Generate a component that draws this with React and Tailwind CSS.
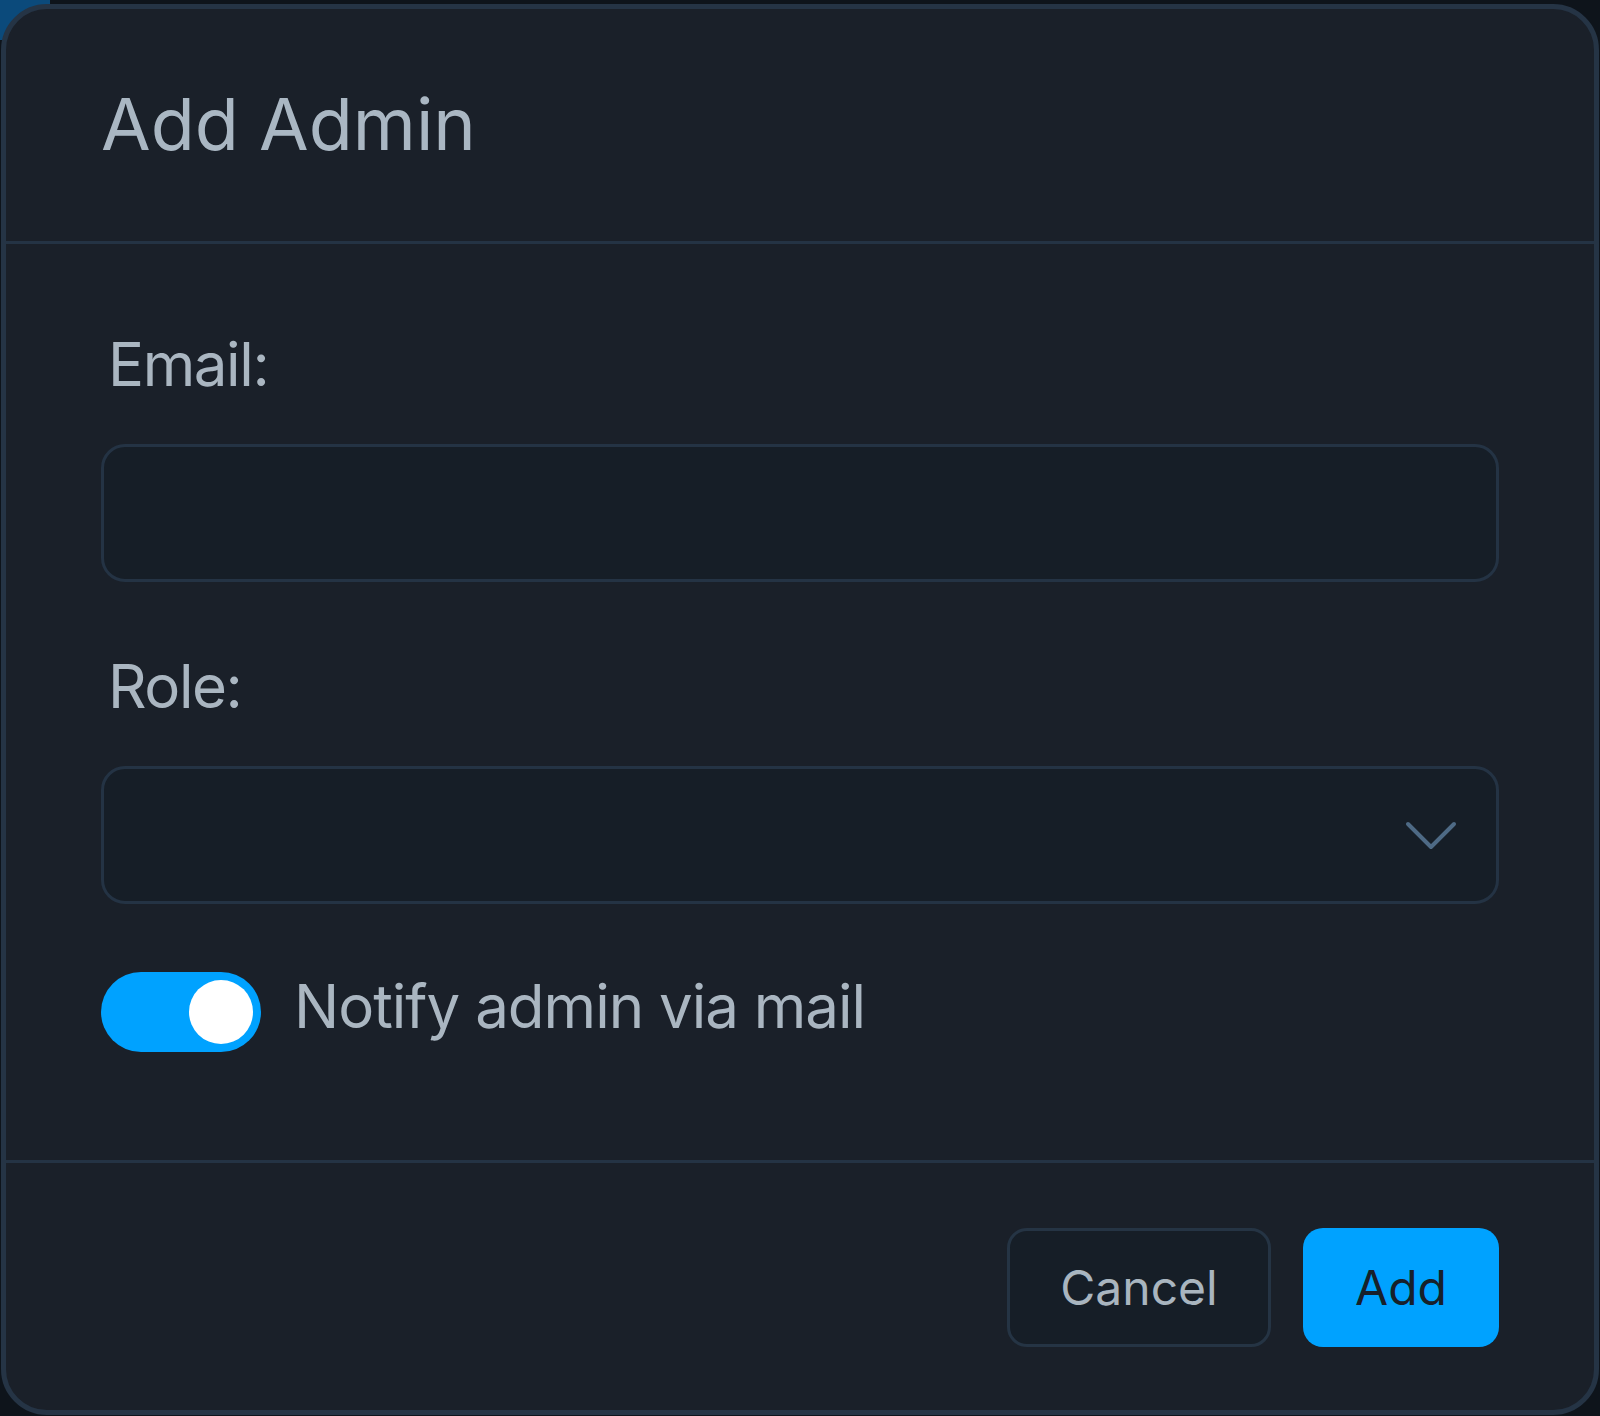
import React, { useState } from 'react';

const font = { fontFamily: 'Inter, "Noto Sans", sans-serif' };

function Field({ label, children, last }) {
  return (
    <div className={last ? '' : 'mb-[68px]'}>
      <label className="block pl-[7px] text-[60px] leading-[73px] tracking-[-1.4px] text-[#aab6c1] mb-[43px]">{label}</label>
      {children}
    </div>
  );
}

function Toggle({ on, onChange }) {
  return (
    <button
      type="button"
      onClick={() => onChange(!on)}
      className={`relative w-[160px] h-[80px] shrink-0 rounded-full ${on ? 'bg-[#00a2ff]' : 'bg-[#2a3746]'}`}
    >
      <span
        className={`absolute top-[8px] w-[64px] h-[64px] rounded-full bg-white ${on ? 'right-[8px]' : 'left-[8px]'}`}
      />
    </button>
  );
}

export default function App() {
  const [email, setEmail] = useState('');
  const [role, setRole] = useState('');
  const [notify, setNotify] = useState(true);

  return (
    <div className="relative w-[1600px] h-[1416px] bg-[#0e141b] overflow-hidden" style={font}>
      {/* backdrop peeking behind the dialog */}
      <div className="absolute left-0 top-0 w-[50px] h-[40px] bg-[#0b4a7b]" />

      <div className="relative ml-[1px] mt-[4px] w-[1598px] h-[1411px] border-[5px] border-[#253445] rounded-[46px] bg-[#1a2029] flex flex-col overflow-hidden">
        <div className="px-[95px] pt-[71px] pb-[74px] border-b-[3px] border-[#243344]">
          <h2 className="text-[72px] leading-[87px] text-[#aab7c3] font-normal">Add Admin</h2>
        </div>

        <div className="px-[95px] pt-[84px] pb-[108px] border-b-[3px] border-[#243344]">
          <Field label="Email:">
            <input
              value={email}
              onChange={e => setEmail(e.target.value)}
              className="block w-full h-[138px] rounded-[24px] border-[3px] border-[#243344] bg-[#161e27] px-[30px] text-[56px] text-[#aab6c1] outline-none"
            />
          </Field>
          <Field label="Role:">
            <div className="relative h-[138px] rounded-[24px] border-[3px] border-[#243344] bg-[#161e27] flex items-center justify-end pr-[39px]">
              <select
                value={role}
                onChange={e => setRole(e.target.value)}
                className="absolute inset-0 opacity-0"
              >
                <option value=""></option>
                <option value="admin">Admin</option>
                <option value="owner">Owner</option>
              </select>
              <svg width="52" height="32" viewBox="0 0 52 32" fill="none">
                <polyline points="3,5 26,28 49,5" stroke="#4e6a85" strokeWidth="4" strokeLinecap="round" strokeLinejoin="round" />
              </svg>
            </div>
          </Field>
          <div className="flex items-start gap-[33px] mt-[1px]">
            <Toggle on={notify} onChange={setNotify} />
            <span className="text-[60px] leading-[73px] tracking-[-1px] text-[#aab6c1] -mt-[2px]">Notify admin via mail</span>
          </div>
        </div>

        <div className="flex-1 flex justify-end items-start gap-[32px] px-[95px] pt-[65px]">
          <button className="w-[264px] h-[119px] rounded-[20px] border-[3px] border-[#253444] bg-[#161e27] text-[48px] text-[#a9b5bf] flex items-center justify-center">
            Cancel
          </button>
          <button className="w-[196px] h-[119px] rounded-[20px] bg-[#00a2ff] text-[48px] text-[#17202a] flex items-center justify-center">
            Add
          </button>
        </div>
      </div>
    </div>
  );
}
